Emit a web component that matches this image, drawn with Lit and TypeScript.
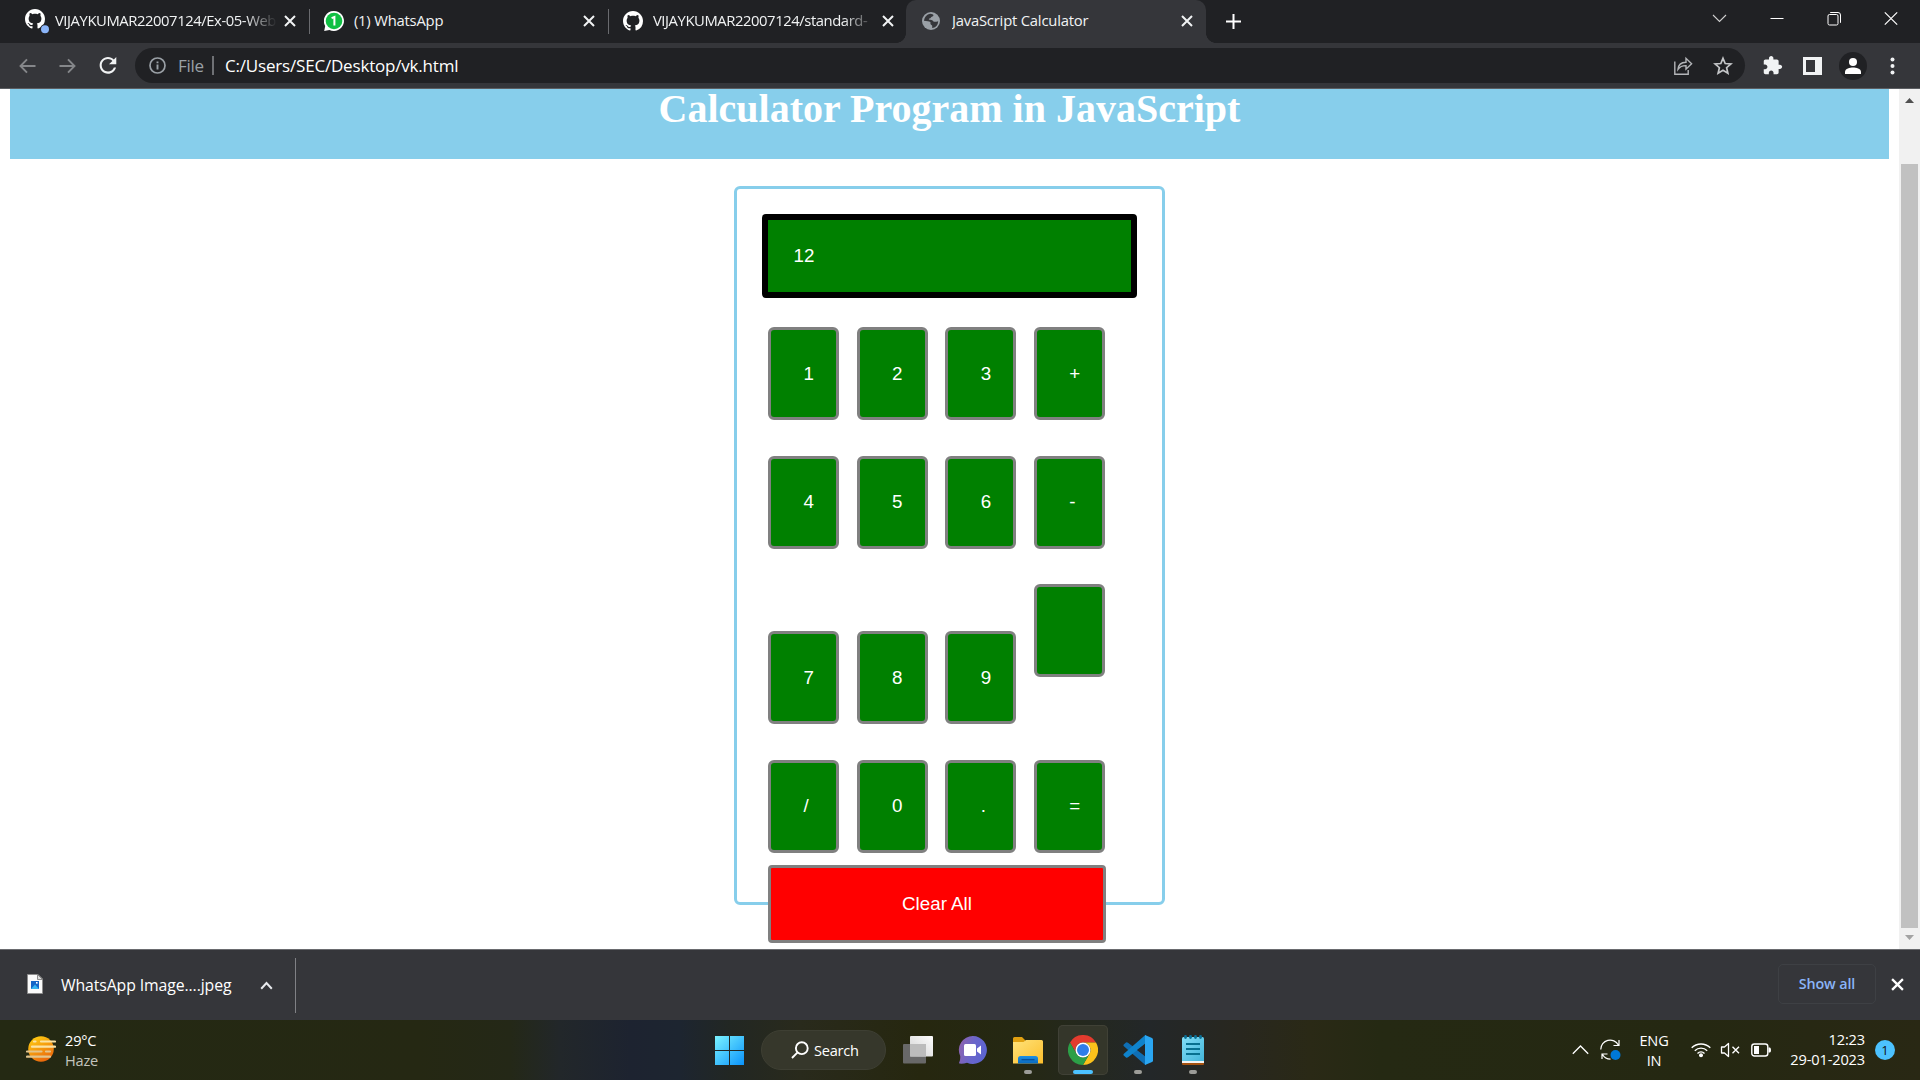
import { LitElement, html, css, nothing, type TemplateResult } from "lit";
import { customElement, property, state } from "lit/decorators.js";
import { classMap } from "lit/directives/class-map.js";

const uiFont = css`"Open Sans", "Noto Sans", sans-serif`;

const githubPath =
  "M8 0C3.58 0 0 3.58 0 8c0 3.54 2.29 6.53 5.47 7.59.4.07.55-.17.55-.38 0-.19-.01-.82-.01-1.49-2.01.37-2.53-.49-2.69-.94-.09-.23-.48-.94-.82-1.13-.28-.15-.68-.52-.01-.53.63-.01 1.08.58 1.23.82.72 1.21 1.87.87 2.33.66.07-.52.28-.87.51-1.07-1.78-.2-3.64-.89-3.64-3.95 0-.87.31-1.59.82-2.15-.08-.2-.36-1.02.08-2.12 0 0 .67-.21 2.2.82.64-.18 1.32-.27 2-.27.68 0 1.36.09 2 .27 1.53-1.04 2.2-.82 2.2-.82.44 1.1.16 1.92.08 2.12.51.56.82 1.27.82 2.15 0 3.07-1.87 3.75-3.65 3.95.29.25.54.73.54 1.48 0 1.07-.01 1.93-.01 2.2 0 .21.15.46.55.38A8.013 8.013 0 0016 8c0-4.42-3.58-8-8-8z";

const githubIcon = html`<svg width="20" height="20" viewBox="0 0 16 16"><path fill="#fff" d=${githubPath} /></svg>`;

const githubBusyIcon = html`<svg width="26" height="26" viewBox="0 0 26 26">
  <g transform="translate(0 1) scale(1.25)"><path fill="#fff" d=${githubPath} /></g>
  <circle cx="20" cy="21.3" r="5" fill="#202124" />
  <circle cx="20" cy="21.3" r="4" fill="#8ab4f8" />
</svg>`;

const whatsappIcon = html`<svg width="20" height="20" viewBox="0 0 20 20">
  <path fill="#fff" d="M10 0a10 10 0 1 1-4.6 18.9L.2 20l1-5A10 10 0 0 1 10 0z" />
  <circle cx="10" cy="10" r="8.3" fill="#10c043" />
  <path fill="none" stroke="#fff" stroke-width="2" d="M7.6 7.2 10.4 6v8.6" />
</svg>`;

const globeIcon = html`<svg width="18" height="18" viewBox="0 0 18 18">
  <circle cx="9" cy="9" r="9" fill="#9aa0a6" />
  <path fill="#35363a" d="M8.2 1.8c2 .3 2.8.5 3.2 1.3.2 1-.8 1.5-2 1.9-.7.3-.5 1-1.1 1.3-.9.3-1.6.2-1.4 1.3.6.5 2.300 .2 3.300.7 1 .5.8 1.300 1.800 1.500 1 .2 2.800-.2 4.200-.6a7.400 7.400 0 0 1-5.600 6.800c-.8-.3-.2-1.400-.4-2.300-.2-.8-1.400-.8-1.700-1.700-.2-.9.3-1.500-.3-2-1-.8-3.400-.6-6.300-1.200A7.400 7.400 0 0 1 8.200 1.800z" />
</svg>`;

const cross = (size: number, width: number, color: string) => html`<svg width=${size} height=${size} viewBox="0 0 12 12">
  <path d="M1 1 11 11M11 1 1 11" stroke=${color} stroke-width=${width} fill="none" />
</svg>`;

@customElement("browser-tab")
class BrowserTab extends LitElement {
  @property({ type: Boolean, reflect: true }) active = false;
  @property({ type: Boolean }) divided = false;
  @property({ attribute: false }) icon: TemplateResult | typeof nothing = nothing;
  @property() label = "";

  static styles = css`
    :host { display: block; width: 299px; height: 43px; flex: none; }
    .tab {
      position: relative; height: 43px; box-sizing: border-box; display: flex; align-items: center;
      padding: 0 14px 1px; font: 14.8px/20px ${uiFont}; color: #f1f3f4;
    }
    .divided::after { content: ""; position: absolute; right: 0; top: 9px; width: 1px; height: 25px; background: #6a6b6f; }
    .active::before {
      content: ""; position: absolute; left: -2px; width: 300px; top: 0; bottom: 0;
      background: #35363a; border-radius: 10px 10px 0 0;
    }
    .flare { position: absolute; bottom: 0; width: 10px; height: 10px; }
    .fl { left: -12px; background: radial-gradient(circle at 0 0, #202124 9.6px, #35363a 10.2px); }
    .fr { right: -9px; background: radial-gradient(circle at 100% 0, #202124 9.6px, #35363a 10.2px); }
    .icon { position: relative; width: 30px; height: 26px; display: flex; align-items: center; }
    .label {
      position: relative; width: 221px; margin-top: -3px; overflow: hidden; white-space: nowrap;
      letter-spacing: var(--track, -0.2px);
    }
    .fade { mask-image: linear-gradient(90deg, #000 190px, transparent 222px); }
    .close { position: relative; margin-left: 8.500px; display: flex; }
    svg { display: block; }
  `;

  render() {
    return html`<div class=${classMap({ tab: true, active: this.active, divided: this.divided })}>
      ${this.active ? html`<i class="flare fl"></i><i class="flare fr"></i>` : nothing}
      <span class="icon">${this.icon}</span>
      <span class=${classMap({ label: true, fade: this.label.length > 26 })}>${this.label}</span>
      <span class="close">${cross(12, 2, "#f1f3f4")}</span>
    </div>`;
  }
}

@customElement("title-strip")
class TitleStrip extends LitElement {
  static styles = css`
    :host { display: flex; height: 43px; background: #202124; padding-left: 11px; }
    .plus { margin: 14px 0 0 19px; width: 15px; height: 15px; }
    .controls { display: flex; margin-left: auto; padding: 11px 22px 0 0; gap: 43px; }
    browser-tab.wide { --track: -0.42px; }
    svg { display: block; }
  `;
  render() {
    return html`
      <browser-tab class="wide" divided .icon=${githubBusyIcon} label="VIJAYKUMAR22007124/Ex-05-Web"></browser-tab>
      <browser-tab divided .icon=${whatsappIcon} label="(1) WhatsApp"></browser-tab>
      <browser-tab class="wide" .icon=${githubIcon} label="VIJAYKUMAR22007124/standard-"></browser-tab>
      <browser-tab active .icon=${globeIcon} label="JavaScript Calculator"></browser-tab>
      <div class="plus"><svg width="15" height="15" viewBox="0 0 15 15"><path d="M7.500 0V15M0 7.500H15" stroke="#fff" stroke-width="2" /></svg></div>
      <div class="controls">
        <svg width="15" height="15" viewBox="0 0 15 15"><path d="M1 4 7.500 10.500 14 4" fill="none" stroke="#d0d0d0" stroke-width="1.100" /></svg>
        <svg width="14" height="15" viewBox="0 0 14 15"><path d="M.5 7.500H13.500" stroke="#fff" stroke-width="1" /></svg>
        <svg width="14" height="15" viewBox="0 0 14 15"><rect x="1" y="3.500" width="10" height="10.500" rx="1.500" fill="none" stroke="#fff" /><path d="M3.200 1.500H11a2.500 2.500 0 0 1 2.500 2.500v7.800" fill="none" stroke="#fff" /></svg>
        <svg width="14" height="15" viewBox="0 0 14 15"><path d="M.8 1.300 13.200 13.700M13.200 1.300 .8 13.700" stroke="#fff" stroke-width="1.200" /></svg>
      </div>`;
  }
}

@customElement("address-bar")
class AddressBar extends LitElement {
  static styles = css`
    :host {
      display: flex; align-items: center; height: 46px; box-sizing: border-box; background: #35363a;
      border-bottom: 1px solid #5c5e62; padding-left: 19px; font: 17px/24px ${uiFont};
    }
    svg { display: block; flex: none; }
    .fwd { margin-left: 23px; }
    .reload { margin-left: 18px; }
    .omni {
      display: flex; align-items: center; box-sizing: border-box; width: 1610px; height: 35px; margin-left: 16px;
      border-radius: 18px; background: #202124; padding: 0 12px 0 14px; color: #fff; white-space: nowrap;
    }
    .scheme { width: 26px; margin: 0 8px 0 12px; color: #9aa0a6; letter-spacing: -0.3px; }
    .bar { width: 2px; height: 19px; background: #6f7175; }
    .url { margin: 0 auto 0 11px; letter-spacing: -0.19px; }
    .star { margin-left: 20px; }
    .ext { margin-left: 17px; }
    .panel { margin-left: 20px; }
    .avatar { margin-left: 17px; }
    .dots { margin-left: 23px; }
  `;
  render() {
    return html`
      <svg width="17" height="16" viewBox="0 0 17 16"><path d="M16.500 8H1.500M8 1.300 1.500 8 8 14.700" fill="none" stroke="#85878a" stroke-width="1.900" /></svg>
      <svg class="fwd" width="17" height="16" viewBox="0 0 17 16"><path d="M.5 8H15.500M9 1.300 15.500 8 9 14.700" fill="none" stroke="#85878a" stroke-width="1.900" /></svg>
      <svg class="reload" width="25" height="25" viewBox="0 0 24 24"><path fill="#f1f3f4" transform="translate(1.400 -.2)" d="M17.650 6.350C16.200 4.900 14.210 4 12 4c-4.420 0-7.990 3.580-7.990 8s3.570 8 7.990 8c3.730 0 6.840-2.550 7.730-6h-2.080c-.82 2.330-3.040 4-5.650 4-3.310 0-6-2.690-6-6s2.690-6 6-6c1.660 0 3.140.69 4.220 1.780L13 11h7V4l-2.350 2.350z" /></svg>
      <div class="omni">
        <svg width="17" height="17" viewBox="0 0 17 17"><circle cx="8.500" cy="8.500" r="7.500" fill="none" stroke="#9aa0a6" stroke-width="1.700" /><path d="M8.500 7.500V12.600M8.500 4.400V6.200" stroke="#9aa0a6" stroke-width="1.900" /></svg>
        <span class="scheme">File</span><i class="bar"></i>
        <span class="url">C:/Users/SEC/Desktop/vk.html</span>
        <svg width="20" height="20" viewBox="0 0 20 20"><path d="M1.800 5.500V18.200H15.200V14M5 13.300C5.300 8.800 8 6.300 13 6.200V2.300L18.600 7.800 13 13.200V9.600C9.300 9.500 7 10.500 5 13.300z" fill="none" stroke="#b4b6b9" stroke-width="1.400" /></svg>
        <svg class="star" width="20" height="20" viewBox="0 0 20 20"><path d="M10 2.300 12.200 7.500 17.900 8 13.600 11.700 14.900 17.200 10 14.300 5.100 17.200 6.400 11.700 2.100 8 7.800 7.500z" fill="none" stroke="#c4c6c8" stroke-width="1.700" /></svg>
      </div>
      <svg class="ext" width="21" height="21" viewBox="0 0 24 24"><path fill="#f1f3f4" d="M20.500 11H19V7c0-1.100-.9-2-2-2h-4V3.500C13 2.120 11.880 1 10.500 1S8 2.120 8 3.500V5H4c-1.100 0-1.990.9-1.990 2v3.800H3.500c1.490 0 2.700 1.210 2.700 2.700s-1.210 2.700-2.700 2.700H2V20c0 1.100.9 2 2 2h3.800v-1.500c0-1.490 1.210-2.700 2.700-2.700 1.490 0 2.700 1.210 2.700 2.700V22H17c1.100 0 2-.9 2-2v-4h1.500c1.380 0 2.500-1.120 2.500-2.500S21.880 11 20.500 11z" /></svg>
      <svg class="panel" width="19" height="18" viewBox="0 0 19 18"><rect width="19" height="18" fill="#f1f3f4" /><rect x="3" y="3" width="9" height="12" fill="#35363a" /></svg>
      <svg class="avatar" width="28" height="28" viewBox="0 0 28 28"><circle cx="14" cy="14" r="14" fill="#202124" /><circle cx="14" cy="10" r="4" fill="#fff" /><path fill="#fff" d="M6 22v-2.200c0-3 5-4.300 8-4.300s8 1.300 8 4.300V22z" /></svg>
      <svg class="dots" width="5" height="18" viewBox="0 0 5 18"><circle cx="2.500" cy="2.500" r="2" fill="#f1f3f4" /><circle cx="2.500" cy="9" r="2" fill="#f1f3f4" /><circle cx="2.500" cy="15.500" r="2" fill="#f1f3f4" /></svg>`;
  }
}

@customElement("calc-page")
class CalcPage extends LitElement {
  @state() private value = "12";
  private rows = [
    ["1", "2", "3", "+"],
    ["4", "5", "6", "-"],
    ["7", "8", "9", ""],
    ["/", "0", ".", "="],
  ];

  static styles = css`
    :host { display: flex; height: 860px; background: #fff; overflow: hidden; }
    .body { flex: 1; padding: 0 10px; }
    h1 {
      margin: 0; height: 70px; background: #87ceeb; color: #fff; text-align: center;
      font: bold 40px/39px "Liberation Serif", "Times New Roman", serif;
    }
    .calc {
      box-sizing: border-box; width: 431px; height: 719px; margin: 27px auto 0; padding: 25px;
      border: 3px solid #87ceeb; border-radius: 6px;
    }
    .display, .key, .clear { font: 18.750px/24px "Liberation Sans", Arial, sans-serif; color: #fff; box-sizing: border-box; }
    .display {
      height: 84px; border: 6px solid #000; border-radius: 4px; background: green;
      padding: 24px 25.500px 0;
    }
    .row { display: flex; gap: 17.600px; margin-left: 6px; margin-top: 36px; }
    .row0 { margin-top: 29px; }
    .row2 { height: 140px; align-items: flex-end; margin-top: 35px; }
    .key {
      display: block; width: 71px; height: 93px; margin: 0; border: 3px solid gray; border-radius: 6px; background: green;
      padding: 1px 0 0 32.500px; text-align: left;
    }
    .row1 .key, .row3 .key { padding-top: 0; padding-bottom: 1px; }
    .blank { align-self: flex-start; }
    .clear {
      display: block; width: 338px; height: 78px; margin: 12px 0 0 6px; border: 3px solid gray; border-radius: 4px;
      background: red; padding: 0;
    }
    .scroll { display: flex; flex-direction: column; align-items: center; width: 21px; background: #f1f1f1; }
    .up, .down { display: block; width: 9px; height: 5px; background: #505050; clip-path: polygon(50% 0, 100% 100%, 0 100%); margin-top: 9px; }
    .thumb { width: 17px; height: 764px; margin-top: 61px; background: #c1c1c1; }
    .down { background: #a3a3a3; clip-path: polygon(0 0, 100% 0, 50% 100%); margin-top: 7px; }
  `;

  private press(k: string) {
    if (k && k !== "=") this.value += k;
  }

  render() {
    return html`<div class="body">
        <h1>Calculator Program in JavaScript</h1>
        <div class="calc">
          <div class="display">${this.value}</div>
          ${this.rows.map(
            (row, i) => html`<div class="row row${i}">
              ${row.map((k) => html`<button class=${classMap({ key: true, blank: !k })} @click=${() => this.press(k)}>${k}</button>`)}
            </div>`
          )}
          <button class="clear" @click=${() => (this.value = "")}>Clear All</button>
        </div>
      </div>
      <div class="scroll"><i class="up"></i><i class="thumb"></i><i class="down"></i></div>`;
  }
}

@customElement("download-shelf")
class DownloadShelf extends LitElement {
  static styles = css`
    :host {
      display: flex; align-items: center; height: 71px; box-sizing: border-box; border-top: 1px solid #6a6b6f;
      background: #35363a; padding: 0 16px 0 27px; font: 15.800px/22px ${uiFont}; color: #fff; white-space: nowrap;
    }
    svg { display: block; flex: none; }
    .file { margin-top: -3px; }
    .name { width: 180px; margin-left: 18px; letter-spacing: -0.1px; }
    .caret { margin-left: 19px; }
    .line { width: 1px; height: 55px; margin-left: 22px; background: #808185; }
    .all {
      box-sizing: border-box; width: 98px; height: 40px; margin: 0 15px 0 auto; border: 1px solid #3e4044; border-radius: 5px;
      text-align: center; font: 600 14.300px/38px ${uiFont}; color: #8ab4f8; letter-spacing: -0.1px;
    }
    .all, .x { transform: translateY(-1px); }
  `;
  render() {
    return html`
      <svg class="file" width="16" height="20" viewBox="0 0 16 20"><path d="M.5.5H11L15.500 5V19.500H.5z" fill="#fafafa" stroke="#8d8d8d" /><path d="M10.500.5V5.500H15.500z" fill="#ddd" stroke="#777" stroke-width=".8" /><rect x="4" y="7" width="8" height="8" fill="#1565c8" /><path d="M4 15 8 10.500 12 15z" fill="#35b5f2" /><rect x="9" y="8" width="1.600" height="1.600" fill="#fff" /></svg>
      <span class="name">WhatsApp Image....jpeg</span>
      <svg class="caret" width="13" height="9" viewBox="0 0 13 9"><path d="M1.200 7.700 6.500 2 11.800 7.700" fill="none" stroke="#e8eaed" stroke-width="2" /></svg>
      <i class="line"></i>
      <span class="all">Show all</span>
      <span class="x">${cross(13, 2.1, "#fff")}</span>`;
  }
}

@customElement("task-bar")
class TaskBar extends LitElement {
  static styles = css`
    :host {
      display: flex; height: 60px; font: 14.600px/20px ${uiFont}; color: #fff; white-space: nowrap;
      background: linear-gradient(90deg, #242913 0, #252813 420px, #242817 510px, #22272a 560px, #1d2330 630px, #1d2530 680px,
        #222723 730px, #292a1c 800px, #26270f 920px, #252813 1020px, #24281f 1090px, #232729 1150px, #28271f 1240px,
        #2a2916 1310px, #252913 1380px, #252812 1700px, #292814 1920px);
    }
    svg { display: block; flex: none; }
    .weather { display: flex; width: 715px; }
    .weather svg { margin: 15px 9px 0 26px; }
    .lines { padding-top: 10px; letter-spacing: -0.2px; }
    .dim { color: #c3c4bd; }
    .start { margin-top: 16px; }
    .search {
      display: flex; box-sizing: border-box; width: 125px; height: 40px; margin: 10px 17px 0 17px; border-radius: 20px;
      background: #36372b; border: 1px solid #3e3f33; padding: 10px 0 0 29px;
    }
    .search span { margin: -1px 0 0 5px; letter-spacing: -0.25px; }
    .tv { margin-top: 16px; }
    .chat { margin: 16px 0 0 25px; }
    .apps { display: flex; margin: 5px 0 0 15px; gap: 5px; }
    .app {
      box-sizing: border-box; display: flex; flex-direction: column; align-items: center; width: 50px; height: 50px;
      padding-top: 10px; border-radius: 5px;
    }
    .on { background: #34362a; box-shadow: inset 0 0 0 1px #404136; }
    .ind { width: 8px; height: 4px; margin-top: 5px; border-radius: 2px; background: #9c9c98; }
    .on .ind { width: 20px; background: #4cc2ff; }
    .tray { display: flex; margin-left: auto; }
    .chev { margin-top: 24px; }
    .sync { margin: 19px 0 0 11px; }
    .lang { width: 40px; margin: 10px 0 0 13px; text-align: center; letter-spacing: -0.2px; }
    .wifi { margin: 21px 0 0 17px; }
    .vol { margin: 21px 0 0 9px; }
    .bat { margin: 22px 0 0 10px; }
    .clock { width: 94px; margin: 9px 10px 0 0; text-align: right; letter-spacing: -0.15px; }
    .badge {
      width: 20px; height: 20px; margin: 20px 25px 0 0; border-radius: 50%; background: #4cc2ff; color: #111; text-align: center;
      font-size: 13px;
    }
  `;

  private apps = [
    { on: false, icon: html`<svg width="30" height="30" viewBox="0 0 30 30">
        <defs><linearGradient id="fold" x1="0" y1="0" x2="1" y2="1"><stop offset="0" stop-color="#ffe27a" /><stop offset="1" stop-color="#fcbf2c" /></linearGradient>
        <linearGradient id="tray" x1="0" y1="0" x2="0" y2="1"><stop offset="0" stop-color="#1e90e4" /><stop offset="1" stop-color="#0869bd" /></linearGradient></defs>
        <path fill="#e0a011" d="M0 3.500A1.500 1.500 0 0 1 1.500 2H9l3.500 3.500V9H0z" /><path fill="url(#fold)" d="M0 7H10.500L13 5H28.500A1.500 1.500 0 0 1 30 6.500V28.500H0z" />
        <path fill="url(#tray)" d="M5 28.500V23.500A2.500 2.500 0 0 1 7.500 21H22.500A2.500 2.500 0 0 1 25 23.500V28.500z" /><path stroke="#07509b" stroke-width="1.300" d="M8.500 24.700H21.500" /></svg>` },
    { on: true, icon: html`<svg width="30" height="30" viewBox="0 0 48 48">
        <path fill="#e33b2e" d="M3.200 12A24 24 0 0 1 44.800 12H24A12 12 0 0 0 13.600 30z" />
        <path fill="#fcc21b" d="M44.800 12A24 24 0 0 1 24 48L34.400 30A12 12 0 0 0 24 12z" />
        <path fill="#2c9f47" d="M24 48A24 24 0 0 1 3.200 12L13.600 30A12 12 0 0 0 34.400 30z" />
        <circle cx="24" cy="24" r="12" fill="#fff" /><circle cx="24" cy="24" r="9.600" fill="#2f7de9" /></svg>` },
    { on: false, icon: html`<svg width="30" height="30" viewBox="0 0 30 30">
        <path fill="#0f6fb5" d="M1 9.300 3 7.500Q4 7 5 7.700L27 24.500 22.300 30 .6 11Q0 10 1 9.300z" />
        <path fill="#0f83cc" d="M1 20.700 3 22.500Q4 23 5 22.300L27 5.500 22.300 0 .6 19Q0 20 1 20.700z" />
        <path fill="#2aa6f2" d="M22 0 29 3Q30 3.500 30 4.500V25.500Q30 26.500 29 27L22 30z" /><path fill="#24282a" d="M22 8.700V21.300L14 15z" /></svg>` },
    { on: false, icon: html`<svg width="30" height="30" viewBox="0 0 30 30">
        <defs><linearGradient id="note" x1="0" y1="0" x2="1" y2="1"><stop offset="0" stop-color="#82def6" /><stop offset="1" stop-color="#43b5da" /></linearGradient></defs>
        <path fill="#a4510f" d="M4 26H26V29Q26 30 25 30H5Q4 30 4 29z" /><path fill="#f3f3f3" d="M4 24H26V28H4z" /><path fill="url(#note)" d="M4 3.500Q4 2 5.500 2H24.500Q26 2 26 3.500V26H4z" />
        <path stroke="#0a6f96" stroke-width="2.800" stroke-linecap="round" d="M7.500 1.500V2.500M12.500 1.500V2.500M17.500 1.500V2.500M22.500 1.500V2.500" />
        <path stroke="#07708f" stroke-width="1.800" d="M8 9H22M8 14H22M8 19H22" /></svg>` },
  ];

  render() {
    return html`
      <div class="weather">
        <svg width="30" height="30" viewBox="0 0 30 30">
          <defs><linearGradient id="sun" x1="0.200" y1="0" x2="0.700" y2="1"><stop offset="0" stop-color="#ffcf12" /><stop offset="1" stop-color="#e9620b" /></linearGradient></defs>
          <circle cx="15" cy="14" r="12.800" fill="url(#sun)" />
          <path stroke="#fbe3a4" stroke-width="2.200" stroke-linecap="round" d="M8 6.500H9.500M15 6.500H29M6 11.700H29" /><path stroke="#e2c48c" stroke-width="2.200" stroke-linecap="round" d="M1 16.500H15.500M20 16.500H24M1 21.700H24" />
        </svg>
        <div class="lines"><div>29°C</div><div class="dim">Haze</div></div>
      </div>
      <svg class="start" width="29" height="29" viewBox="0 0 29 29">
        <defs><linearGradient id="win" gradientUnits="userSpaceOnUse" x1="0" y1="0" x2="29" y2="29"><stop offset="0" stop-color="#7bf3ff" /><stop offset="1" stop-color="#0a93fb" /></linearGradient></defs>
        <path fill="url(#win)" d="M0 0H14V14H0zM15 0H29V14H15zM0 15H14V29H0zM15 15H29V29H15z" />
      </svg>
      <div class="search">
        <svg width="18" height="18" viewBox="0 0 18 18"><circle cx="10.800" cy="7.200" r="5.900" fill="none" stroke="#fff" stroke-width="1.900" /><path d="M6.600 11.400 1 17" stroke="#fff" stroke-width="1.900" /></svg>
        <span>Search</span>
      </div>
      <svg class="tv" width="30" height="28" viewBox="0 0 30 28">
        <defs><linearGradient id="pane" x1="0" y1="1" x2="1" y2="0"><stop offset="0" stop-color="#d2d2d2" /><stop offset="1" stop-color="#fdfdfd" /></linearGradient></defs>
        <rect x="0" y="8" width="23" height="19.500" rx="1" fill="#686868" /><rect x="7" y="0" width="23" height="20.500" rx="1" fill="url(#pane)" /><path fill="#bcbcbc" d="M7 8H23V20.500H7z" />
      </svg>
      <svg class="chat" width="30" height="29" viewBox="0 0 30 29">
        <defs><linearGradient id="chat" x1="0" y1="0.300" x2="1" y2="0.600"><stop offset="0" stop-color="#8d62ae" /><stop offset="0.500" stop-color="#6a66cb" /><stop offset="1" stop-color="#5b64d2" /></linearGradient></defs>
        <path fill="url(#chat)" d="M15 0A14 14 0 1 1 9 26.700Q5 28 1.500 27.500 .7 27.300 1.200 26.500 2.500 24 2.200 20A14 14 0 0 1 15 0z" />
        <rect x="6" y="8" width="12" height="12" rx="1.500" fill="#fff" /><path fill="#fff" d="M19 12.500 23 9.500V18.500L19 15.500z" />
      </svg>
      <div class="apps">
        ${this.apps.map((a) => html`<div class=${classMap({ app: true, on: a.on })}>${a.icon}<i class="ind"></i></div>`)}
      </div>
      <div class="tray">
        <svg class="chev" width="17" height="11" viewBox="0 0 17 11"><path d="M.8 9.800 8.500 2 16.200 9.800" fill="none" stroke="#fff" stroke-width="1.300" /></svg>
        <svg class="sync" width="21" height="22" viewBox="0 0 21 22"><path d="M.8 10.500A9.300 9.300 0 0 1 18.300 6M19 1V6.500H13.500M2 20V15H7.500M2.500 15.500A9.300 9.300 0 0 0 10.500 20.200" fill="none" stroke="#fff" stroke-width="1.200" /><circle cx="15.500" cy="16" r="5" fill="#0078d7" /></svg>
        <div class="lang"><div>ENG</div><div>IN</div></div>
        <svg class="wifi" width="20" height="17" viewBox="0 0 20 17"><path d="M.7 6.800A13.200 13.200 0 0 1 19.300 6.800M3.800 9.700A8.800 8.800 0 0 1 16.200 9.700M6.500 12.500A5 5 0 0 1 13.500 12.500" fill="none" stroke="#fff" stroke-width="1.400" /><circle cx="10" cy="14.300" r="2" fill="#fff" /></svg>
        <svg class="vol" width="21" height="17" viewBox="0 0 21 17"><path d="M1.500 6H4.500L8.500 2.500V15.500L4.500 12H1.500z" fill="none" stroke="#fff" stroke-width="1.300" stroke-linejoin="round" /><path d="M12.500 5.800 19 12.300M19 5.800 12.500 12.300" stroke="#fff" stroke-width="1.400" /></svg>
        <svg class="bat" width="20" height="16" viewBox="0 0 20 16"><rect x=".8" y="2" width="16" height="12" rx="2.500" fill="none" stroke="#fff" stroke-width="1.400" /><path d="M3 4H8V12H3z" fill="#fff" /><path d="M17.500 5.500H19Q20 6 20 8T19 10.500H17.500z" fill="#fff" /></svg>
        <div class="clock"><div>12:23</div><div>29-01-2023</div></div>
        <div class="badge">1</div>
      </div>`;
  }
}

@customElement("app-root")
class AppRoot extends LitElement {
  static styles = css`
    :host { display: block; width: 1920px; height: 1080px; overflow: hidden; background: #fff; }
  `;
  render() {
    return html`<title-strip></title-strip><address-bar></address-bar><calc-page></calc-page><download-shelf></download-shelf><task-bar></task-bar>`;
  }
}
